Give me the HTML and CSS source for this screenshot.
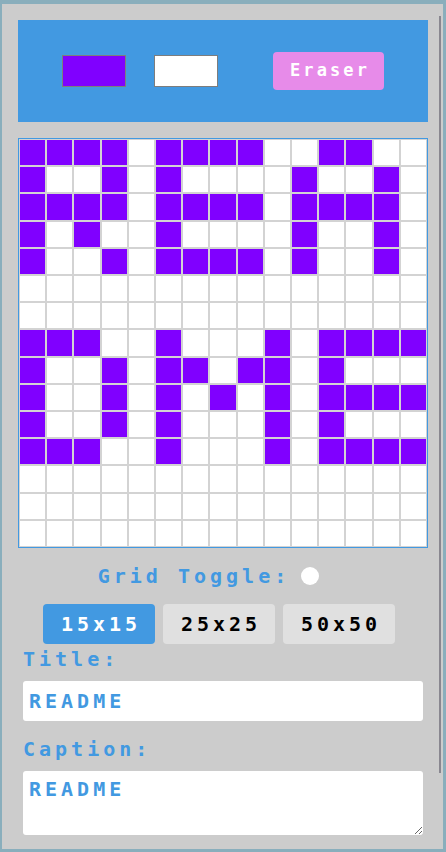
FILE: index.html
```html
<!DOCTYPE html>
<html lang="en">
<head>
<meta charset="utf-8">
<title>Pixel Editor</title>
<link rel="stylesheet" href="styles.css">
</head>
<body>
<main class="app">
  <div class="scroll-thumb"></div>
  <section class="toolbar">
    <div class="swatches">
      <div class="swatch swatch-primary"></div>
      <div class="swatch swatch-secondary"></div>
    </div>
    <button class="eraser">Eraser</button>
  </section>
  <section class="grid">
    <i class="on"></i><i class="on"></i><i class="on"></i><i class="on"></i><i></i><i class="on"></i><i class="on"></i><i class="on"></i><i class="on"></i><i></i><i></i><i class="on"></i><i class="on"></i><i></i><i></i>
    <i class="on"></i><i></i><i></i><i class="on"></i><i></i><i class="on"></i><i></i><i></i><i></i><i></i><i class="on"></i><i></i><i></i><i class="on"></i><i></i>
    <i class="on"></i><i class="on"></i><i class="on"></i><i class="on"></i><i></i><i class="on"></i><i class="on"></i><i class="on"></i><i class="on"></i><i></i><i class="on"></i><i class="on"></i><i class="on"></i><i class="on"></i><i></i>
    <i class="on"></i><i></i><i class="on"></i><i></i><i></i><i class="on"></i><i></i><i></i><i></i><i></i><i class="on"></i><i></i><i></i><i class="on"></i><i></i>
    <i class="on"></i><i></i><i></i><i class="on"></i><i></i><i class="on"></i><i class="on"></i><i class="on"></i><i class="on"></i><i></i><i class="on"></i><i></i><i></i><i class="on"></i><i></i>
    <i></i><i></i><i></i><i></i><i></i><i></i><i></i><i></i><i></i><i></i><i></i><i></i><i></i><i></i><i></i>
    <i></i><i></i><i></i><i></i><i></i><i></i><i></i><i></i><i></i><i></i><i></i><i></i><i></i><i></i><i></i>
    <i class="on"></i><i class="on"></i><i class="on"></i><i></i><i></i><i class="on"></i><i></i><i></i><i></i><i class="on"></i><i></i><i class="on"></i><i class="on"></i><i class="on"></i><i class="on"></i>
    <i class="on"></i><i></i><i></i><i class="on"></i><i></i><i class="on"></i><i class="on"></i><i></i><i class="on"></i><i class="on"></i><i></i><i class="on"></i><i></i><i></i><i></i>
    <i class="on"></i><i></i><i></i><i class="on"></i><i></i><i class="on"></i><i></i><i class="on"></i><i></i><i class="on"></i><i></i><i class="on"></i><i class="on"></i><i class="on"></i><i class="on"></i>
    <i class="on"></i><i></i><i></i><i class="on"></i><i></i><i class="on"></i><i></i><i></i><i></i><i class="on"></i><i></i><i class="on"></i><i></i><i></i><i></i>
    <i class="on"></i><i class="on"></i><i class="on"></i><i></i><i></i><i class="on"></i><i></i><i></i><i></i><i class="on"></i><i></i><i class="on"></i><i class="on"></i><i class="on"></i><i class="on"></i>
    <i></i><i></i><i></i><i></i><i></i><i></i><i></i><i></i><i></i><i></i><i></i><i></i><i></i><i></i><i></i>
    <i></i><i></i><i></i><i></i><i></i><i></i><i></i><i></i><i></i><i></i><i></i><i></i><i></i><i></i><i></i>
    <i></i><i></i><i></i><i></i><i></i><i></i><i></i><i></i><i></i><i></i><i></i><i></i><i></i><i></i><i></i>
  </section>
  <div class="toggle-row">
    <span class="toggle-label">Grid Toggle:</span>
    <span class="toggle"></span>
  </div>
  <div class="sizes">
    <button class="size active">15x15</button>
    <button class="size">25x25</button>
    <button class="size">50x50</button>
  </div>
  <form class="meta">
    <label class="label">Title:</label>
    <input class="field" type="text" value="README">
    <label class="label caption-label">Caption:</label>
    <textarea class="field area">README</textarea>
  </form>
</main>
</body>
</html>
```
FILE: styles.css
```css
* { box-sizing: border-box; }
html, body { margin: 0; }
body {
  background: #89aebc;
  padding: 4px 3px 3px 2px;
  height: 852px;
  overflow: hidden;
}
.app {
  position: relative;
  width: 441px;
  height: 845px;
  background: #cccccc;
  padding: 16px 15px 0 16px;
  overflow: hidden;
  font-family: "DejaVu Sans Mono", monospace;
  font-weight: bold;
}
.scroll-thumb {
  position: absolute;
  left: 437px;
  top: 12px;
  width: 2px;
  height: 757px;
  background: #898790;
}
.toolbar {
  height: 102px;
  background: #4299e1;
  display: flex;
  align-items: center;
  justify-content: space-between;
  padding: 0 44px;
}
.swatches { display: flex; gap: 28px; }
.swatch { width: 64px; height: 32px; border: 1px solid #7d7d7d; }
.swatch-primary { background: #8000ff; }
.swatch-secondary { background: #ffffff; }
.eraser {
  width: 111px;
  height: 38px;
  border: 0;
  border-radius: 4px;
  background: #e78be9;
  color: #ffffff;
  font: bold 17px/20px "DejaVu Sans Mono", monospace;
  letter-spacing: 3.1px;
  padding: 0 0 3px 3px;
}
.grid {
  margin-top: 16px;
  width: 410px;
  height: 410px;
  border: 1px solid #4299e1;
  display: grid;
  grid-template-columns: repeat(15, 1fr);
  grid-template-rows: repeat(15, 1fr);
  background: #ffffff;
}
.grid i { display: block; border: 1px solid #d3d3d3; background: #ffffff; }
.grid i.on { background: #8000ff; }
.toggle-row {
  height: 56px;
  display: flex;
  align-items: center;
  justify-content: center;
  padding-right: 29px;
}
.toggle-label {
  font-size: 20px;
  line-height: 22px;
  letter-spacing: 4px;
  color: #4299e1;
}
.toggle {
  width: 18px;
  height: 18px;
  border-radius: 50%;
  background: #ffffff;
  margin-left: 11px;
}
.sizes {
  display: flex;
  justify-content: center;
  gap: 8px;
  padding-right: 8px;
}
.size {
  width: 112px;
  height: 40px;
  border: 0;
  border-radius: 4px;
  background: #e0e0e0;
  color: #000000;
  font: bold 20px/22px "DejaVu Sans Mono", monospace;
  letter-spacing: 4px;
  padding: 0 0 0 4px;
}
.size.active { background: #4299e1; color: #ffffff; }
.meta { padding: 0 5px; }
.label {
  display: block;
  margin-top: 4px;
  font-size: 20px;
  line-height: 22px;
  letter-spacing: 4px;
  color: #4299e1;
}
.caption-label { margin-top: 17px; }
.field {
  display: block;
  width: 400px;
  height: 40px;
  margin-top: 11px;
  border: 0;
  border-radius: 3px;
  background: #ffffff;
  color: #4299e1;
  font: bold 20px/22px "DejaVu Sans Mono", monospace;
  letter-spacing: 4px;
  padding: 0 6px;
  outline: none;
}
.area {
  height: 64px;
  padding: 7px 6px;
}
```
